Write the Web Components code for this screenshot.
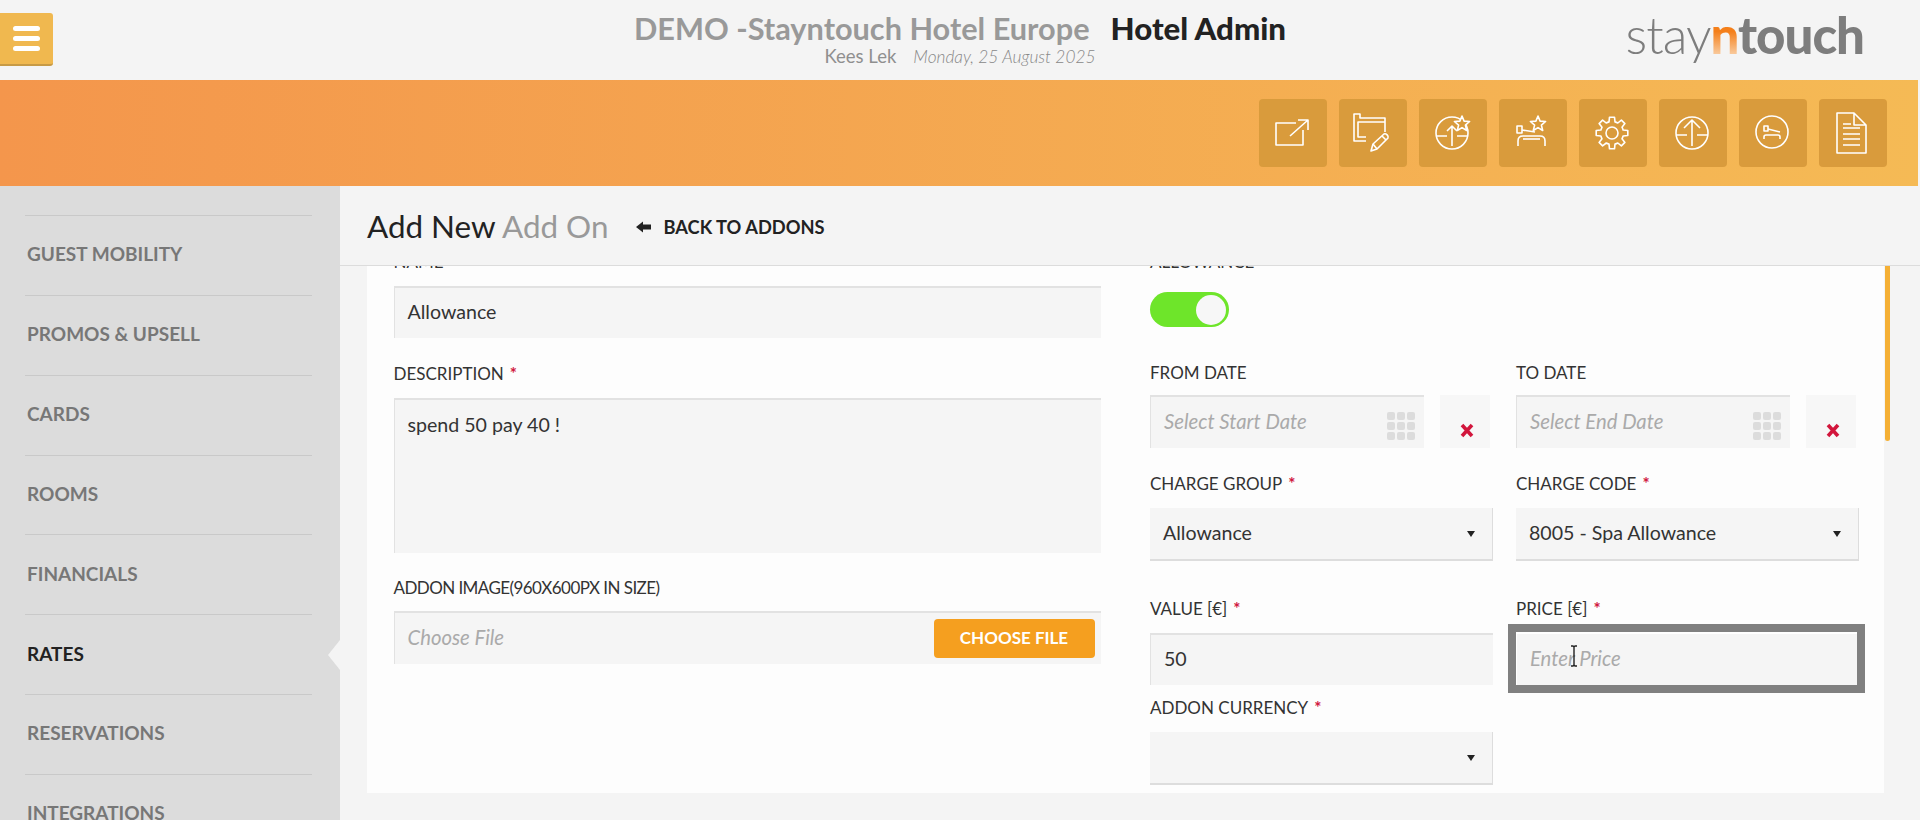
<!DOCTYPE html>
<html>
<head>
<meta charset="utf-8">
<title>Add New Add On</title>
<style>
  html, body { margin: 0; height: 820px; overflow: hidden; }
  body { font-family: Lato, "Noto Sans", sans-serif; font-size: 20px; color: #333; background: #f4f4f4; }
</style>
</head>
<body>
<st-app>
  <st-topbar slot="top" hotel="DEMO -Stayntouch Hotel Europe" section="Hotel Admin" user="Kees Lek" date="Monday, 25 August 2025"></st-topbar>
  <st-toolbar slot="top">
    <st-tool icon="open"></st-tool>
    <st-tool icon="folder"></st-tool>
    <st-tool icon="upsell"></st-tool>
    <st-tool icon="bedstar"></st-tool>
    <st-tool icon="gear"></st-tool>
    <st-tool icon="up"></st-tool>
    <st-tool icon="bed"></st-tool>
    <st-tool icon="doc"></st-tool>
  </st-toolbar>
  <st-sidebar slot="side">
    <st-nav>GUEST MOBILITY</st-nav>
    <st-nav>PROMOS &amp; UPSELL</st-nav>
    <st-nav>CARDS</st-nav>
    <st-nav>ROOMS</st-nav>
    <st-nav>FINANCIALS</st-nav>
    <st-nav active>RATES</st-nav>
    <st-nav>RESERVATIONS</st-nav>
    <st-nav>INTEGRATIONS</st-nav>
  </st-sidebar>
  <st-page heading="Add New" sub="Add On" back="BACK TO ADDONS">
    <st-column slot="left">
      <st-field label="NAME" style="--gap:12px"><st-input value="Allowance"></st-input></st-field>
      <st-field label="DESCRIPTION" required style="--top:24px;--gap:12px"><st-input value="spend 50 pay 40 !" area></st-input></st-field>
      <st-field label="ADDON IMAGE(960X600PX IN SIZE)" style="--top:23px;--gap:11px;letter-spacing:-.57px"><st-file placeholder="Choose File" button="CHOOSE FILE" style="letter-spacing:0"></st-file></st-field>
    </st-column>
    <st-column slot="right">
      <st-field label="ALLOWANCE" style="--gap:18px"><st-toggle></st-toggle></st-field>
      <st-row style="--row-top:34px">
        <st-field label="FROM DATE" style="--gap:10px"><st-date placeholder="Select Start Date"></st-date></st-field>
        <st-field label="TO DATE" style="--gap:10px"><st-date placeholder="Select End Date"></st-date></st-field>
      </st-row>
      <st-row style="--row-top:24px">
        <st-field label="CHARGE GROUP" required style="--gap:12px"><st-select value="Allowance"></st-select></st-field>
        <st-field label="CHARGE CODE" required style="--gap:12px"><st-select value="8005 - Spa Allowance"></st-select></st-field>
      </st-row>
      <st-row style="--row-top:36px">
        <st-field label="VALUE [€]" required style="--gap:12px"><st-input value="50"></st-input></st-field>
        <st-field label="PRICE [€]" required style="--gap:12px"><st-input placeholder="Enter Price" focused></st-input></st-field>
      </st-row>
      <st-row style="--row-top:11px">
        <st-field label="ADDON CURRENCY" required style="--gap:12px"><st-select value=""></st-select></st-field>
      </st-row>
    </st-column>
  </st-page>
</st-app>

<script>
// small geometry helpers for the toolbar icons
function starPath(cx, cy, r) {
  let d = "";
  for (let i = 0; i < 10; i++) {
    const a = -Math.PI / 2 + i * Math.PI / 5;
    const rr = i % 2 ? r * 0.45 : r;
    d += (i ? "L" : "M") + (cx + rr * Math.cos(a)).toFixed(1) + " " + (cy + rr * Math.sin(a)).toFixed(1);
  }
  return d + "Z";
}

function gearPath(cx, cy, ro, ri) {
  let d = "";
  const pt = (deg, r) => (cx + r * Math.cos(deg * Math.PI / 180)).toFixed(1) + " " + (cy + r * Math.sin(deg * Math.PI / 180)).toFixed(1);
  for (let i = 0; i < 8; i++) {
    const a = i * 45;
    d += (i ? "L" : "M") + pt(a - 15, ri) + "L" + pt(a - 9, ro) + "L" + pt(a + 9, ro) + "L" + pt(a + 15, ri);
    d += "A" + ri + " " + ri + " 0 0 1 " + pt(a + 30, ri);
  }
  return d + "Z";
}

const BTN = "#d99b3c";
const ICONS = {
  open: `<path d="M37 24H17V46H44V31"/><path d="M31 37L49 21M39 21H49V31"/>`,
  folder: `<path d="M27 42H15V15H21V19H46V33"/><path d="M27 38H19V23H46"/>
    <path d="M32 52L34 45L45 35C47 34 50 37 49 39L38 50Z"/><path d="M34 45L38 50M43 37L47 41"/>`,
  upsell: `<circle cx="33" cy="34" r="16"/><path d="M17 37H28M38 37H49M33 47V27M28 32L33 27L38 32"/>
    <path d="${starPath(43, 25, 8)}" fill="${BTN}"/>`,
  bedstar: `<path d="${starPath(39, 25, 8)}"/><rect x="18" y="27" width="5" height="7"/><path d="M23 31L36 33"/>
    <path d="M19 47V42Q19 37 24 37H41Q46 37 46 42V47"/><path d="M24 40H41"/>`,
  gear: `<path d="${gearPath(33, 34, 16, 11.5)}"/><circle cx="33" cy="34" r="6"/>`,
  up: `<circle cx="33" cy="34" r="16"/><path d="M17 36H28M38 36H49M33 47V21M25 29L33 21L41 29"/>`,
  bed: `<circle cx="33" cy="33" r="16"/><rect x="25" y="27" width="4" height="5"/><path d="M29 30L41 33"/>
    <path d="M25 40V38Q25 36 27 36H39Q41 36 41 38V40"/>`,
  doc: `<path d="M35 14H18V54H47V26L35 14V26H47"/><path d="M24 25H32M24 29H41M24 35H41M24 40H41M24 46H41"/>`
};

class StApp extends HTMLElement {
  constructor() {
    super();
    this.attachShadow({ mode: "open" });
    this.shadowRoot.innerHTML = `
    <style>
      :host { display: flex; flex-direction: column; height: 820px; overflow: hidden; }
      #body { display: flex; flex: 1; min-height: 0; }
    </style>
    <slot name="top"></slot>
    <div id="body">
      <slot name="side"></slot>
      <slot></slot>
    </div>`;
  }
}

class StTopbar extends HTMLElement {
  constructor() {
    super();
    this.attachShadow({ mode: "open" });
    this.shadowRoot.innerHTML = `
    <style>
      :host { display: grid; grid-template-columns: 1fr auto 1fr; height: 80px; background: #f4f4f4; }
      #menu { width: 40px; height: 51px; margin-top: 13px; background: #f0b84f; border-bottom: 2px solid #c79a45; border-radius: 0 3px 3px 0;
        display: flex; flex-direction: column; justify-content: center; gap: 5px; padding-left: 13px; }
      #menu i { display: block; width: 27px; height: 5px; background: #fff; border-radius: 3px; }
      #mid { text-align: center; padding-top: 10px; }
      #title { font-size: 30.7px; font-weight: 700; line-height: 36px; color: #999; white-space: nowrap; }
      #title b { color: #222; margin-left: 21px; font-size: 31.2px; }
      #sub { font-size: 18.5px; line-height: 20px; margin-top: -1px; color: #8f8f8f; white-space: nowrap; }
      #sub em { font-size: 17.3px; font-weight: 300; margin-left: 17px; color: #888; }
      #logo { justify-self: end; padding: 5px 56px 0 0; font-size: 51px; line-height: 60px; color: #7d7d7d; white-space: nowrap; letter-spacing: -1px; }
      #logo span { font-weight: 300; }
      #logo b { font-weight: 900; }
      #logo .n { background: linear-gradient(#f47f1a 45%, #f9cfa6 85%); -webkit-background-clip: text; background-clip: text; color: transparent; }
    </style>
    <div><div id="menu"><i></i><i></i><i></i></div></div>
    <div id="mid">
      <div id="title">${this.getAttribute("hotel")}<b>${this.getAttribute("section")}</b></div>
      <div id="sub">${this.getAttribute("user")}<em>${this.getAttribute("date")}</em></div>
    </div>
    <div id="logo"><span>stay</span><b class="n">n</b><b>touch</b></div>`;
  }
}

class StToolbar extends HTMLElement {
  constructor() {
    super();
    this.attachShadow({ mode: "open" });
    this.shadowRoot.innerHTML = `
    <style>
      :host { display: flex; justify-content: flex-end; align-items: center; gap: 12px; height: 106px; width: 1918px; padding-right: 31px;
        box-sizing: border-box; background: linear-gradient(to right, #f4964c, #f5ba55); }
    </style>
    <slot></slot>`;
  }
}

class StTool extends HTMLElement {
  constructor() {
    super();
    this.attachShadow({ mode: "open" });
    this.shadowRoot.innerHTML = `
    <style>
      :host { display: block; width: 68px; height: 68px; background: ${BTN}; border-radius: 4px; }
      svg { display: block; width: 68px; height: 68px; fill: none; stroke: #fff; stroke-width: 1.6; stroke-linejoin: round; }
    </style>
    <svg viewBox="0 0 68 68">${ICONS[this.getAttribute("icon")]}</svg>`;
  }
}

class StSidebar extends HTMLElement {
  constructor() {
    super();
    this.attachShadow({ mode: "open" });
    this.shadowRoot.innerHTML = `
    <style>
      :host { display: block; width: 340px; flex: none; box-sizing: border-box; padding: 29px 28px 0 25px; background: #dcdcdc; overflow: hidden; }
    </style>
    <slot></slot>`;
  }
}

class StNav extends HTMLElement {
  constructor() {
    super();
    this.attachShadow({ mode: "open" });
    this.shadowRoot.innerHTML = `
    <style>
      :host { display: flex; align-items: center; height: 79.85px; box-sizing: border-box; padding: 0 0 3px 2px; position: relative;
        border-top: 1px solid #c9c9c9; font-size: 19px; font-weight: 700; color: #777; white-space: nowrap; }
      :host([active]) { color: #222; }
      #notch { display: none; position: absolute; right: -28px; top: 25px; width: 0; height: 0;
        border: 15px solid transparent; border-left: 0; border-right: 12px solid #f4f4f4; }
      :host([active]) #notch { display: block; }
    </style>
    <slot></slot><div id="notch"></div>`;
  }
}

class StPage extends HTMLElement {
  constructor() {
    super();
    this.attachShadow({ mode: "open" });
    this.shadowRoot.innerHTML = `
    <style>
      :host { display: block; flex: 1; min-width: 0; background: #f4f4f4; }
      header { display: flex; align-items: center; height: 80px; box-sizing: border-box; padding-left: 27px; border-bottom: 1px solid #dcdcdc; }
      h1 { margin: 0; font-size: 31.4px; font-weight: 400; color: #222; white-space: nowrap; }
      h1 span { color: #999; }
      #back { display: flex; align-items: center; gap: 12px; margin: 3px 0 0 28px; font-size: 18.3px; font-weight: 700; color: #222; white-space: nowrap; }
      #panel { height: 527px; margin: 0 36px 0 26.5px; padding-left: 27px; overflow: hidden; background: #fdfdfd; display: flex; gap: 49.5px; }
      #left { display: block; width: 707px; margin-top: -16px; }
      #right { display: block; width: 709px; margin-top: -16px; }
      #track { position: relative; }
      #scroll { position: absolute; left: 1545px; top: 0; width: 5px; height: 175px; background: #f5b035; border-radius: 0 0 3px 3px; }
    </style>
    <header>
      <h1>${this.getAttribute("heading")} <span>${this.getAttribute("sub")}</span></h1>
      <div id="back">
        <svg width="15" height="12" viewBox="0 0 15 12"><path d="M0 6L7 0.5V3.5H15V8.5H7V11.5Z" fill="#222"/></svg>
        ${this.getAttribute("back")}
      </div>
    </header>
    <div id="track">
      <div id="panel">
        <slot id="left" name="left"></slot>
        <slot id="right" name="right"></slot>
      </div>
      <div id="scroll"></div>
    </div>`;
  }
}

class StColumn extends HTMLElement {
  constructor() {
    super();
    this.attachShadow({ mode: "open" });
    this.shadowRoot.innerHTML = `
    <style>:host { display: flex; flex-direction: column; }</style>
    <slot></slot>`;
  }
}

class StRow extends HTMLElement {
  constructor() {
    super();
    this.attachShadow({ mode: "open" });
    this.shadowRoot.innerHTML = `
    <style>:host { display: grid; grid-template-columns: 343px 343px; column-gap: 23px; margin-top: var(--row-top, 0); }</style>
    <slot></slot>`;
  }
}

class StField extends HTMLElement {
  constructor() {
    super();
    this.attachShadow({ mode: "open" });
    const star = this.hasAttribute("required") ? `<i>*</i>` : "";
    this.shadowRoot.innerHTML = `
    <style>
      :host { display: block; margin-top: var(--top, 0); }
      label { display: block; height: 24px; line-height: 23px; margin-bottom: var(--gap, 12px); font-size: 17px; color: #333; white-space: nowrap; }
      i { font-style: normal; font-weight: 700; color: #d0163e; margin-left: 6px; }
    </style>
    <label>${this.getAttribute("label")}${star}</label>
    <slot></slot>`;
  }
}

class StInput extends HTMLElement {
  constructor() {
    super();
    this.attachShadow({ mode: "open" });
    const value = this.getAttribute("value");
    const text = value ? `<span>${value}</span>` : `<em>${this.getAttribute("placeholder")}</em>`;
    const caret = this.hasAttribute("focused")
      ? `<svg id="caret" width="8" height="22" viewBox="0 0 8 22"><path d="M1 1H3L4 2L5 1H7M4 2V20M1 21H3L4 20L5 21H7" fill="none" stroke="#222" stroke-width="1.4"/></svg>` : "";
    this.shadowRoot.innerHTML = `
    <style>
      :host { display: flex; align-items: center; position: relative; height: 52px; box-sizing: border-box; padding: 0 0 4px 13px; background: #f5f5f5;
        border-top: 2px solid #e2e2e2; border-left: 1px solid #e2e2e2; font-size: 19.6px; color: #333; }
      :host([area]) { height: 155px; align-items: flex-start; padding-top: 13px; }
      :host([focused]) { outline: 8px solid #808080; border-top-color: #fff; border-left-color: #fff; width: 341px; height: 53px; margin-top: -1px; }
      em { color: #aaa; font-size: 20.3px; }
      #caret { position: absolute; left: 53px; top: 11px; }
    </style>
    ${text}${caret}`;
  }
}

class StSelect extends HTMLElement {
  constructor() {
    super();
    this.attachShadow({ mode: "open" });
    this.shadowRoot.innerHTML = `
    <style>
      :host { display: flex; align-items: center; justify-content: space-between; height: 53px; box-sizing: border-box; padding: 0 17px 0 13px; background: #f5f5f5;
        border-right: 1px solid #ddd; border-bottom: 2px solid #ddd; font-size: 19.6px; color: #333; }
      span { margin-bottom: 3px; }
      i { width: 0; height: 0; border: 4px solid transparent; border-bottom: 0; border-top: 6px solid #222; }
    </style>
    <span>${this.getAttribute("value")}</span><i></i>`;
  }
}

class StDate extends HTMLElement {
  constructor() {
    super();
    this.attachShadow({ mode: "open" });
    const dots = Array(9).fill("<b></b>").join("");
    this.shadowRoot.innerHTML = `
    <style>
      :host { display: flex; gap: 16px; height: 53px; width: 340px; }
      #box { flex: none; width: 274px; display: flex; align-items: center; justify-content: space-between; box-sizing: border-box; padding: 0 9px 0 13px; background: #f5f5f5;
        border-top: 2px solid #e2e2e2; border-left: 1px solid #e2e2e2; font-size: 20.3px; }
      em { color: #aaa; margin-bottom: 4px; }
      #grid { display: grid; grid-template-columns: repeat(3, 8px); grid-auto-rows: 8px; gap: 2px; margin-top: 7px; }
      #grid b { background: #dcdcdc; border-radius: 2px; }
      #clear { flex: none; width: 50px; display: flex; justify-content: center; align-items: flex-end; padding: 0 0 10px 4px; box-sizing: border-box; background: #f7f7f7; }
      svg { display: block; }
    </style>
    <div id="box"><em>${this.getAttribute("placeholder")}</em><div id="grid">${dots}</div></div>
    <div id="clear"><svg width="14" height="15" viewBox="0 0 14 15"><path d="M2 2L12 13M12 2L2 13" stroke="#d2163c" stroke-width="3.6"/></svg></div>`;
  }
}

class StToggle extends HTMLElement {
  constructor() {
    super();
    this.attachShadow({ mode: "open" });
    this.shadowRoot.innerHTML = `
    <style>
      :host { display: flex; justify-content: flex-end; align-items: center; width: 79px; height: 35px; box-sizing: border-box; padding-right: 3px; background: #6ee52a; border-radius: 18px; }
      i { display: block; width: 30px; height: 30px; border-radius: 50%; background: #f7f7f7; }
    </style>
    <i></i>`;
  }
}

class StFile extends HTMLElement {
  constructor() {
    super();
    this.attachShadow({ mode: "open" });
    this.shadowRoot.innerHTML = `
    <style>
      :host { display: flex; align-items: center; justify-content: space-between; height: 53px; box-sizing: border-box; padding: 0 6px 0 13px; background: #f5f5f5;
        border-top: 2px solid #e2e2e2; border-left: 1px solid #e2e2e2; font-size: 20.3px; }
      em { color: #aaa; margin-bottom: 4px; }
      #btn { width: 161px; height: 39px; line-height: 38px; text-align: center; background: #f59f1f; border-radius: 4px; color: #fff; font-size: 17px; font-weight: 700; }
    </style>
    <em>${this.getAttribute("placeholder")}</em><div id="btn">${this.getAttribute("button")}</div>`;
  }
}

customElements.define("st-app", StApp);
customElements.define("st-topbar", StTopbar);
customElements.define("st-toolbar", StToolbar);
customElements.define("st-tool", StTool);
customElements.define("st-sidebar", StSidebar);
customElements.define("st-nav", StNav);
customElements.define("st-page", StPage);
customElements.define("st-column", StColumn);
customElements.define("st-row", StRow);
customElements.define("st-field", StField);
customElements.define("st-input", StInput);
customElements.define("st-select", StSelect);
customElements.define("st-date", StDate);
customElements.define("st-toggle", StToggle);
customElements.define("st-file", StFile);
</script>
</body>
</html>
